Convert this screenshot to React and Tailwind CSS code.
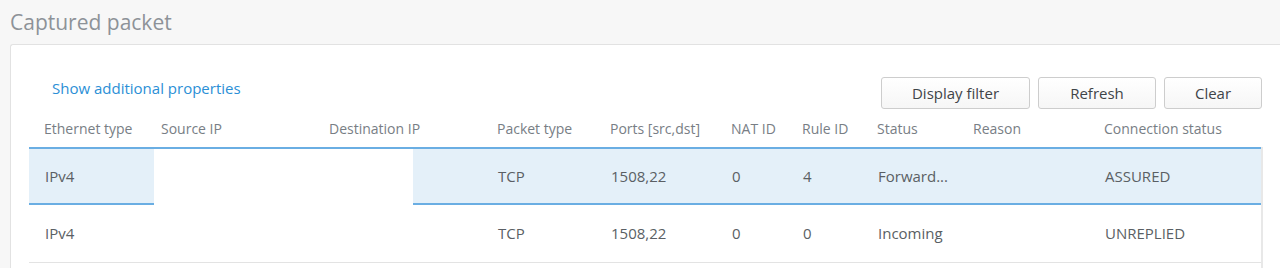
import React from "react";

const cols = "grid-cols-[117px_168px_168px_113px_121px_71px_75px_96px_131px_173px]";

function Btn({ children, w }) {
  return (
    <button
      className={`h-[32px] ${w} rounded-[3px] border border-[#cdcdcd] bg-gradient-to-b from-white to-[#f6f6f6] text-[15px] text-[#3f4448]`}
    >
      {children}
    </button>
  );
}

export default function App() {
  const headers = [
    "Ethernet type",
    "Source IP",
    "Destination IP",
    "Packet type",
    "Ports [src,dst]",
    "NAT ID",
    "Rule ID",
    "Status",
    "Reason",
    "Connection status",
  ];
  const rows = [
    ["IPv4", "", "", "TCP", "1508,22", "0", "4", "Forward...", "", "ASSURED"],
    ["IPv4", "", "", "TCP", "1508,22", "0", "0", "Incoming", "", "UNREPLIED"],
  ];
  return (
    <div
      className="w-[1280px] h-[268px] overflow-hidden bg-[#f7f7f7]"
      style={{ fontFamily: '"Open Sans", "Noto Sans", sans-serif' }}
    >
      <div className="h-[44px] pl-[10px] pt-[7px] text-[21px] leading-[30px] text-[#8d9298]">
        Captured packet
      </div>
      <div className="ml-[10px] h-[230px] rounded-tl-[3px] border-l border-t border-[#e2e2e2] bg-white pl-[18px] pr-[17px]">
        <div className="flex items-start justify-between pt-[32px] pr-[1px]">
          <a className="ml-[23px] mt-[1px] text-[15px] leading-[20px] text-[#2b8fd6]">
            Show additional properties
          </a>
          <div className="flex gap-2">
            <Btn w="w-[149px]">Display filter</Btn>
            <Btn w="w-[118px]">Refresh</Btn>
            <Btn w="w-[98px]">Clear</Btn>
          </div>
        </div>
        <div className={`grid ${cols} h-[38px] items-center text-[14px] text-[#787e85]`}>
          {headers.map((h) => (
            <div key={h} className="pl-[15px] whitespace-nowrap">
              {h}
            </div>
          ))}
        </div>
        <div className="border-r-2 border-[#e8e8e8] h-[140px]">
          <div className="relative">
            <div
              className={`grid ${cols} h-[58px] items-center border-y-2 border-[#6aaee3] bg-[#e4f0f9] text-[15px] text-[#5a5f64]`}
            >
              {rows[0].map((c, i) => (
                <div key={i} className="pl-[16px] whitespace-nowrap">
                  {c}
                </div>
              ))}
            </div>
            <div className="absolute left-[125px] top-[2px] bottom-0 w-[259px] bg-white" />
          </div>
          <div
            className={`grid ${cols} h-[58px] items-center border-b border-[#e3e3e3] text-[15px] text-[#5a5f64]`}
          >
            {rows[1].map((c, i) => (
              <div key={i} className="pl-[16px] whitespace-nowrap">
                {c}
              </div>
            ))}
          </div>
        </div>
      </div>
    </div>
  );
}
